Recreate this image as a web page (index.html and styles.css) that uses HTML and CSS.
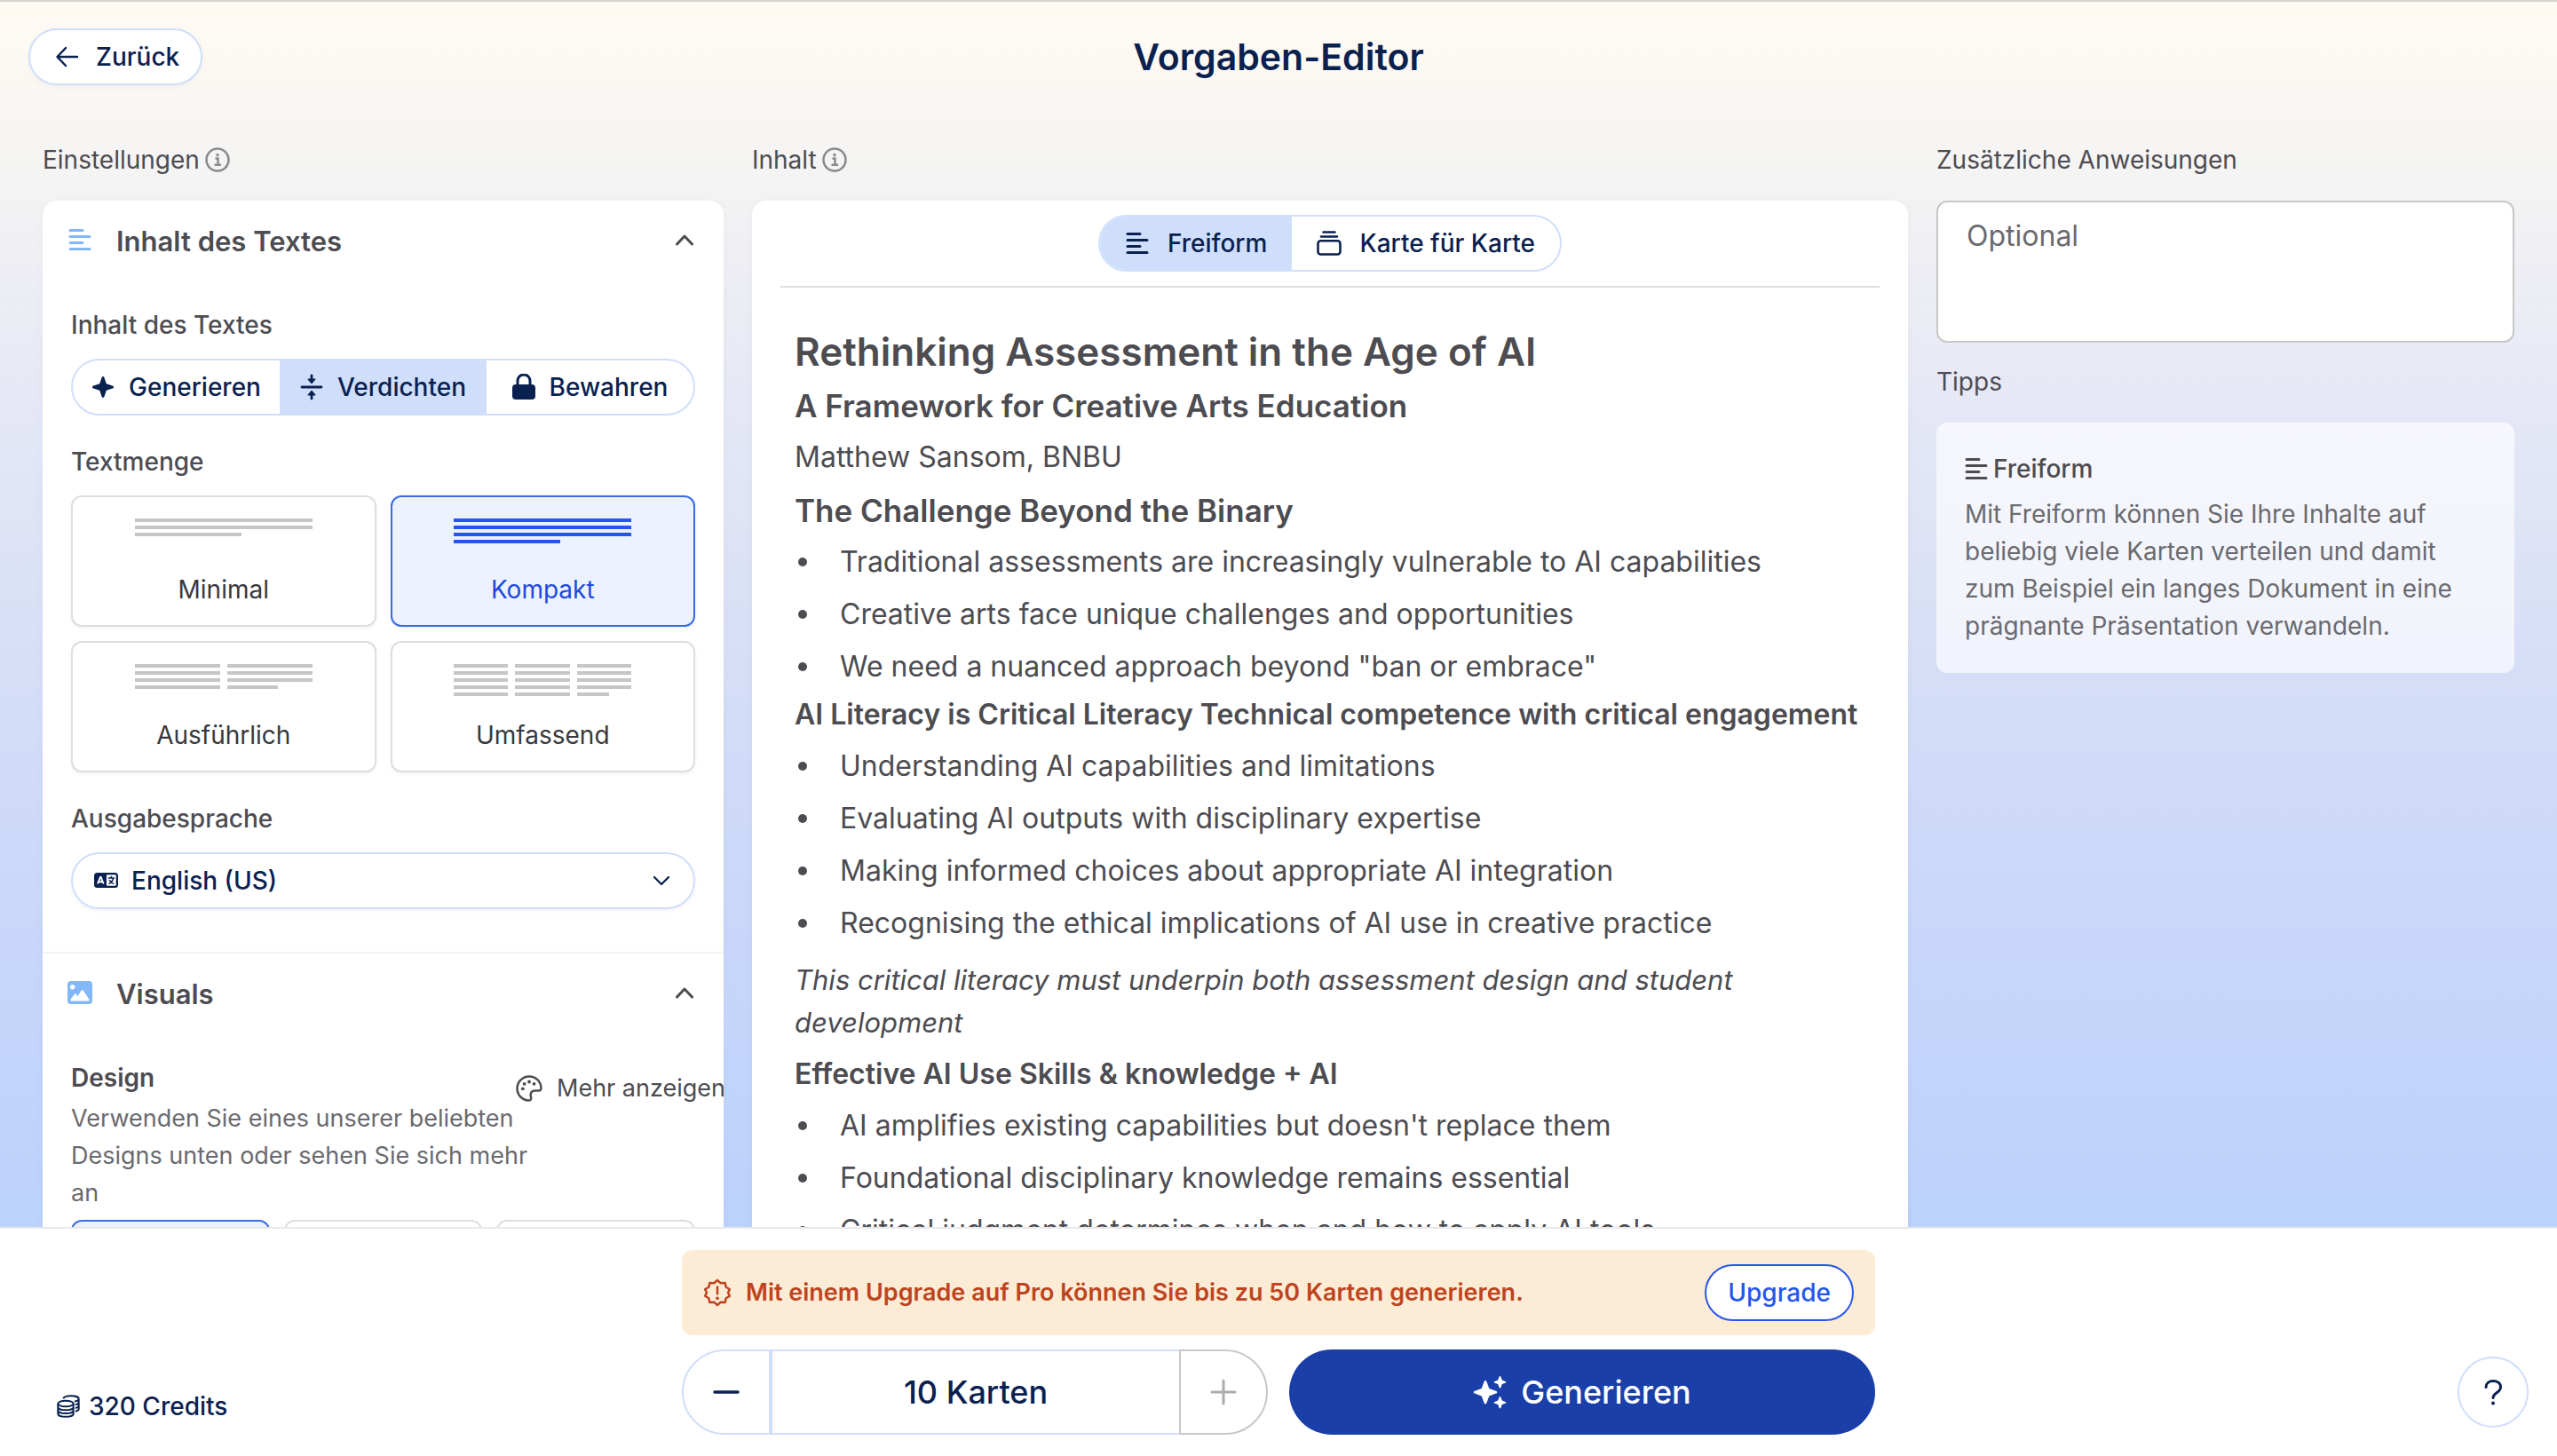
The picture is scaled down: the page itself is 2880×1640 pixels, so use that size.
FILE: index.html
```html
<!DOCTYPE html>
<html lang="de">
<head>
<meta charset="utf-8">
<title>Vorgaben-Editor</title>
<link rel="stylesheet" href="styles.css">
</head>
<body>
<svg class="sprite" aria-hidden="true">
  <symbol id="i-lines" viewBox="0 0 26 26"><path d="M2 2.500h14M2 9.500h22M2 16.500h14M2 23.500h22" fill="none" stroke="currentColor" stroke-width="3" stroke-linecap="round"/></symbol>
  <symbol id="i-info" viewBox="0 0 28 28"><g fill="none" stroke="currentColor" stroke-width="2.500"><circle cx="14" cy="14" r="12.500"/><path d="M11.500 12.500h3v7M10.500 19.800h7.500"/></g><circle cx="14" cy="8.500" r="1.700" fill="currentColor"/></symbol>
  <symbol id="i-up" viewBox="0 0 24 24"><path d="M3.500 17 12 8l8.500 9" fill="none" stroke="currentColor" stroke-width="3" stroke-linecap="round" stroke-linejoin="round"/></symbol>
</svg>
<header class="topbar">
  <button class="pill back" type="button">
    <svg width="28" height="28" viewBox="0 0 28 28"><path d="M25 14H3M12 4 2.500 14 12 24" fill="none" stroke="currentColor" stroke-width="2.500" stroke-linecap="round" stroke-linejoin="round"/></svg>
    Zurück
  </button>
  <h1 class="title">Vorgaben-Editor</h1>
</header>

<main class="columns">
  <section class="column">
    <h2 class="column-label">Einstellungen <svg class="info"><use href="#i-info"/></svg></h2>
    <div class="panel">
      <section>
        <button class="section-head" type="button">
          <svg class="section-icon"><use href="#i-lines"/></svg>
          <span>Inhalt des Textes</span>
          <svg class="chev"><use href="#i-up"/></svg>
        </button>
        <div class="section-body">
          <h3 class="field-label">Inhalt des Textes</h3>
          <div class="segments thirds">
            <button class="segment" type="button">
              <svg width="26" height="26" viewBox="0 0 26 26"><path d="M13 1c.8 0 1.200.6 1.500 1.400l2.300 6.800 6.900 2.300c.9.300 1.300.8 1.300 1.500s-.4 1.200-1.300 1.500l-6.900 2.300-2.300 6.800c-.3.800-.7 1.400-1.500 1.400s-1.200-.6-1.500-1.400l-2.300-6.800-6.900-2.300C1.400 14.200 1 13.700 1 13s.4-1.200 1.300-1.500l6.900-2.300 2.300-6.800C11.800 1.600 12.200 1 13 1z" fill="currentColor"/></svg>
              Generieren</button>
            <button class="segment is-on" type="button">
              <svg width="26" height="30" viewBox="0 0 26 30"><path d="M2 15h22" stroke="currentColor" stroke-width="2.800" stroke-linecap="round"/><path d="M13 2v5M13 28v-5" stroke="currentColor" stroke-width="2.800" stroke-linecap="round"/><path d="M8.800 6h8.400L13 11zM8.800 24h8.400L13 19z" fill="currentColor" stroke="currentColor" stroke-linejoin="round"/></svg>
              Verdichten</button>
            <button class="segment" type="button">
              <svg width="26" height="30" viewBox="0 0 26 30"><rect x="0" y="12" width="26" height="17" rx="4" fill="currentColor"/><path d="M6 14V8a7 7 0 0 1 14 0v6" fill="none" stroke="currentColor" stroke-width="3"/></svg>
              Bewahren</button>
          </div>
          <h3 class="field-label">Textmenge</h3>
          <div class="amounts">
            <label class="amount"><input type="radio" name="amount">
              <svg viewBox="0 0 200 40"><path d="M0 2h200M0 10h200M0 18h120"/></svg>Minimal</label>
            <label class="amount"><input type="radio" name="amount" checked>
              <svg viewBox="0 0 200 40"><path d="M0 2h200M0 10h200M0 18h200M0 26h120"/></svg>Kompakt</label>
            <label class="amount"><input type="radio" name="amount">
              <svg viewBox="0 0 200 40"><path d="M0 2h96M104 2h96M0 10h96M104 10h96M0 18h96M104 18h96M0 26h96M104 26h57"/></svg>Ausführlich</label>
            <label class="amount"><input type="radio" name="amount">
              <svg viewBox="0 0 200 40"><path d="M0 2h61M69 2h62M139 2h61M0 10h61M69 10h62M139 10h61M0 18h61M69 18h62M139 18h61M0 26h61M69 26h62M139 26h61M0 34h61M69 34h62M139 34h36"/></svg>Umfassend</label>
          </div>
          <label class="field-label" for="lang">Ausgabesprache</label>
          <div class="select-box">
            <svg width="28" height="28" viewBox="0 0 28 28"><rect x="0" y="5" width="27" height="17" rx="3.500" fill="currentColor"/><path d="m4 17.500 3-7.500h.6l3 7.500M5.100 15.300h4.400" fill="none" stroke="#fff" stroke-width="1.900"/><rect x="14" y="7.300" width="10.700" height="12.400" rx="1" fill="#fff"/><path d="M15.800 11h7.200M19.400 8.800v2M21.800 11c-.8 3-2.800 5.300-5.300 6.600M17 13c1 2 2.800 3.800 5.300 4.600" fill="none" stroke="currentColor" stroke-width="1.500"/></svg>
            <select id="lang"><option>English (US)</option></select>
            <svg width="24" height="24" viewBox="0 0 24 24"><path d="m4 8 8 8 8-8" fill="none" stroke="currentColor" stroke-width="2.300" stroke-linecap="round" stroke-linejoin="round"/></svg>
          </div>
        </div>
      </section>
      <section class="section-next">
        <button class="section-head" type="button">
          <svg class="section-icon" viewBox="0 0 26 26"><path fill-rule="evenodd" d="M4 0h19a4 4 0 0 1 4 4v18a4 4 0 0 1-4 4H3a4 4 0 0 1-4-4V4a4 4 0 0 1 4-4zM4.700 4a2.700 2.700 0 1 0 0 5.400 2.700 2.700 0 0 0 0-5.400zM3.500 22.500h19c1 0 1.500-.9 1-1.700l-6.800-10.300c-.5-.8-1.500-.8-2 0L10.500 17l-1.800-2.200c-.5-.7-1.400-.7-1.900 0l-4.200 6c-.5.800-.1 1.700.9 1.700z" fill="currentColor"/></svg>
          <span>Visuals</span>
          <svg class="chev"><use href="#i-up"/></svg>
        </button>
        <div class="section-body">
          <div class="design">
            <h3 class="design-title">Design</h3>
            <button class="more" type="button">
              <svg width="30" height="30" viewBox="0 0 30 30"><path d="M28.500 14.500C28.200 7 22.300 1.500 15 1.500S1.500 7.500 1.500 15c0 7 5.200 12.700 12 13.500 3.300.3 4.300-1.700 3.500-4.200-1-3.600.3-6.800 4.500-6.800h4.200c1.900 0 2.900-1.200 2.800-3z" fill="none" stroke="currentColor" stroke-width="2.500" stroke-linejoin="round"/><g fill="currentColor"><circle cx="7.800" cy="15.300" r="1.900"/><circle cx="9.600" cy="9.800" r="1.900"/><circle cx="15" cy="7.500" r="1.900"/><circle cx="20.500" cy="9.800" r="1.900"/></g></svg>
              Mehr anzeigen</button>
            <p class="design-text">Verwenden Sie eines unserer beliebten Designs unten oder sehen Sie sich mehr an</p>
          </div>
          <div class="themes">
            <button class="theme is-on" type="button" aria-label="Design 1"></button>
            <button class="theme" type="button" aria-label="Design 2"></button>
            <button class="theme" type="button" aria-label="Design 3"></button>
          </div>
        </div>
      </section>
    </div>
  </section>

  <section class="column">
    <h2 class="column-label">Inhalt <svg class="info"><use href="#i-info"/></svg></h2>
    <div class="panel content">
      <div class="tabs">
        <div class="segments tabset">
          <button class="segment is-on" type="button"><svg width="28" height="26"><use href="#i-lines"/></svg>Freiform</button>
          <button class="segment" type="button"><svg width="28" height="28" viewBox="0 0 28 28"><path d="M7.500 1.500h13M5 6.500h18" stroke="currentColor" stroke-width="2.600" stroke-linecap="round"/><rect x="1.500" y="11.300" width="25" height="15.200" rx="3" fill="none" stroke="currentColor" stroke-width="2.600"/></svg>Karte für Karte</button>
        </div>
      </div>
      <article class="doc">
        <h1>Rethinking Assessment in the Age of AI</h1>
        <h2>A Framework for Creative Arts Education</h2>
        <p>Matthew Sansom, BNBU</p>
        <h3>The Challenge Beyond the Binary</h3>
        <ul>
          <li>Traditional assessments are increasingly vulnerable to AI capabilities</li>
          <li>Creative arts face unique challenges and opportunities</li>
          <li>We need a nuanced approach beyond "ban or embrace"</li>
        </ul>
        <h4>AI Literacy is Critical Literacy Technical competence with critical engagement</h4>
        <ul>
          <li>Understanding AI capabilities and limitations</li>
          <li>Evaluating AI outputs with disciplinary expertise</li>
          <li>Making informed choices about appropriate AI integration</li>
          <li>Recognising the ethical implications of AI use in creative practice</li>
        </ul>
        <p class="quote"><em>This critical literacy must underpin both assessment design and student development</em></p>
        <h4>Effective AI Use Skills &amp; knowledge + AI</h4>
        <ul>
          <li>AI amplifies existing capabilities but doesn't replace them</li>
          <li>Foundational disciplinary knowledge remains essential</li>
          <li>Critical judgment determines when and how to apply AI tools</li>
        </ul>
      </article>
    </div>
  </section>

  <section class="column">
    <label class="column-label" for="extra">Zusätzliche Anweisungen</label>
    <textarea id="extra" class="extra" placeholder="Optional"></textarea>
    <h2 class="column-label tips-label">Tipps</h2>
    <div class="tip">
      <h3><svg width="26" height="26"><use href="#i-lines"/></svg>Freiform</h3>
      <p>Mit Freiform können Sie Ihre Inhalte auf beliebig viele Karten verteilen und damit zum Beispiel ein langes Dokument in eine prägnante Präsentation verwandeln.</p>
    </div>
  </section>
</main>

<footer class="footer">
  <div class="credits">
    <svg width="26" height="26" viewBox="0 0 26 26"><g fill="none" stroke="currentColor" stroke-width="2"><ellipse cx="10" cy="10" rx="8.700" ry="3.300"/><path d="M1.300 10v11.500c0 2 3.900 3.300 8.700 3.300s8.700-1.300 8.700-3.300V10M1.300 14c0 2 3.900 3.300 8.700 3.300s8.700-1.300 8.700-3.300M1.300 17.800c0 2 3.900 3.300 8.700 3.300s8.700-1.300 8.700-3.300"/><path d="M7.300 4.300C8 2.500 11.500 1.300 16 1.300c5 0 8.700 1.400 8.700 3.200s-2 2.700-4.700 3M24.700 4.500V16c0 1.200-1.300 2.200-3.700 2.800M24.700 8.500c0 1.200-1.300 2.200-3.700 2.800M24.700 12.300c0 1.200-1.300 2.200-3.700 2.800"/></g></svg>
    320 Credits
  </div>
  <div class="actions">
    <div class="notice">
      <svg width="32" height="32" viewBox="0 0 32 32"><path d="M16 2l3.700 3.200 5-.3 1 4.800 4.200 2.600L28 16l1.900 3.700-4.200 2.600-1 4.800-5-.3L16 30l-3.700-3.200-5 .3-1-4.800-4.200-2.600L4 16l-1.900-3.700 4.200-2.600 1-4.800 5 .3z" fill="none" stroke="currentColor" stroke-width="2.500" stroke-linejoin="round"/><path d="M16 9.500v8" stroke="currentColor" stroke-width="2.500" stroke-linecap="round"/><circle cx="16" cy="22.300" r="1.900" fill="currentColor"/></svg>
      <p>Mit einem Upgrade auf Pro können Sie bis zu 50 Karten generieren.</p>
      <button class="pill upgrade" type="button">Upgrade</button>
    </div>
    <div class="run">
      <div class="stepper">
        <button type="button" class="step minus" aria-label="Weniger Karten"><svg width="32" height="32" viewBox="0 0 32 32"><path d="M3 16h26" stroke="currentColor" stroke-width="3.500" stroke-linecap="round"/></svg></button>
        <select class="count" aria-label="Anzahl der Karten"><option>10 Karten</option></select>
        <button type="button" class="step plus" aria-label="Mehr Karten" disabled><svg width="32" height="32" viewBox="0 0 32 32"><path d="M3 16h26M16 3v26" stroke="currentColor" stroke-width="3" stroke-linecap="round"/></svg></button>
      </div>
      <button class="generate" type="button">
        <svg width="38" height="38" viewBox="0 0 38 38" fill="currentColor"><path d="M14 6c.8 0 1.200.6 1.500 1.400l2.800 7.600 7.600 2.800c.9.300 1.300.7 1.300 1.400s-.4 1.100-1.300 1.400l-7.600 2.800-2.800 7.600c-.3.800-.7 1.400-1.500 1.400s-1.200-.6-1.500-1.400l-2.800-7.600-7.600-2.800C1.200 20.300.8 19.900.8 19.200s.4-1.100 1.300-1.400L9.700 15l2.800-7.600C12.800 6.600 13.200 6 14 6z"/><path id="s" d="M30.500 1c.5 0 .7.300.9.800l1.400 3.700 3.700 1.400c.5.200.8.400.8.900s-.3.700-.8.900l-3.700 1.400-1.400 3.700c-.2.500-.4.800-.9.800s-.7-.3-.9-.8l-1.400-3.700-3.700-1.400c-.5-.2-.8-.4-.8-.9s.3-.7.8-.9l3.700-1.400 1.400-3.700c.2-.5.4-.8.9-.8z"/><use href="#s" y="23"/></svg>
        Generieren</button>
    </div>
  </div>
  <button class="help" type="button" aria-label="Hilfe"><svg width="40" height="40" viewBox="0 0 40 40"><path d="M12 14.500C12 10 15.500 7.500 20 7.500s8.500 2.500 8.500 7c0 6-8.500 6.500-8.500 12" fill="none" stroke="currentColor" stroke-width="3" stroke-linecap="round"/><circle cx="20" cy="32.500" r="2" fill="currentColor"/></svg></button>
</footer>
</body>
</html>
```
FILE: styles.css
```css
* { box-sizing: border-box; margin: 0; padding: 0; }

:root {
  --navy: #0a2150;
  --sky: #cfdffb;
  --blue: #2556ec;
  --text: #4c4c51;
  --muted: #6a6a6f;
  --line: #dedede;
}

body {
  display: flex;
  flex-direction: column;
  height: 100vh;
  overflow: hidden;
  border-top: 2px solid #d8d5d0;
  background: linear-gradient(#fffbf2 0, #fefaf3 2%, #f3f3f3 13%, #e6e8f5 27%, #d6def7 46%, #c9d7f9 63%, #bbd2fb 84%);
  color: var(--text);
  font: 400 28px/40px Inter, "Liberation Sans", sans-serif;
}

h1, h2, h3, h4 { font-size: inherit; line-height: inherit; font-weight: inherit; }
button, select, textarea { font: inherit; color: inherit; background: none; border: 0; appearance: none; }
svg { flex: none; }
.sprite { display: none; }

.topbar {
  display: grid;
  grid-template-columns: 1fr auto 1fr;
  align-items: center;
  padding: 30px 32px;
}

.title { font-size: 41px; line-height: 48px; font-weight: 600; color: var(--navy); }

.pill {
  display: flex;
  align-items: center;
  height: 64px;
  border: 2px solid var(--sky);
  border-radius: 32px;
  background: #fff;
  color: var(--navy);
  font-weight: 500;
}

.back { justify-self: start; gap: 18px; padding: 0 24px 0 28px; box-shadow: 0 2px 6px #0000000a; }

.columns {
  flex: 1;
  min-height: 0;
  overflow: hidden;
  display: grid;
  grid-template-columns: 767fr 1302fr 651fr;
  gap: 32px;
  padding: 34px 48px 0;
}

.column { min-width: 0; }
.column-label { display: flex; align-items: center; gap: 6px; margin-bottom: 26px; }
.info { width: 28px; height: 28px; color: #8a8a8e; }

.panel {
  min-height: 100vh;
  border-radius: 16px;
  overflow: hidden;
  background: #fff;
  box-shadow: 0 2px 8px #0000000a;
}

.section-next { border-top: 2px solid #f3f3f3; }

.section-head {
  display: flex;
  align-items: center;
  gap: 28px;
  width: 100%;
  height: 92px;
  padding: 0 32px 0 29px;
  text-align: left;
  font-size: 31px;
  font-weight: 600;
}

.section-head span { flex: 1; }
.section-head svg { margin-bottom: 4px; }
.section-icon { width: 26px; height: 26px; color: #82b8f7; overflow: visible; }
.chev { width: 24px; height: 24px; }
.section-body { padding: 28px 32px 48px; }
.field-label { display: block; margin: 32px 0 18px; font-weight: 500; }
.field-label:first-child { margin-top: 0; }

.segments {
  display: flex;
  height: 64px;
  border: 2px solid var(--sky);
  border-radius: 32px;
  overflow: hidden;
  background: #fff;
}

.segment {
  flex: auto;
  display: flex;
  align-items: center;
  justify-content: center;
  gap: 16px;
  color: var(--navy);
  font-weight: 500;
  white-space: nowrap;
}

.thirds .segment { flex: 1 1 0; }
.segment.is-on { background: var(--sky); }

.amounts { display: grid; grid-template-columns: 1fr 1fr; gap: 16px; }

.amount {
  display: flex;
  flex-direction: column;
  align-items: center;
  height: 148px;
  padding-top: 24px;
  gap: 20px;
  border: 2px solid var(--line);
  border-radius: 12px;
  box-shadow: 0 2px 4px #0000000d;
  color: #38383c;
}

.amount input { position: absolute; opacity: 0; }
.amount svg { width: 200px; height: 40px; fill: none; stroke: #c6c6c6; stroke-width: 4; }
.amount:has(:checked) { border-color: #3a6be0; background: #ebf2fd; color: #2148dd; }
.amount:has(:checked) svg { stroke: var(--blue); }

.select-box {
  display: flex;
  align-items: center;
  gap: 14px;
  height: 64px;
  padding: 0 24px;
  border: 2px solid var(--sky);
  border-radius: 32px;
  box-shadow: 0 2px 4px #0000000d;
  color: var(--navy);
}

.select-box select { flex: 1; font-weight: 500; }

.design {
  display: grid;
  grid-template-columns: 501px auto;
  grid-template-rows: 45px auto;
}

.design-title { font-weight: 600; }
.more { display: flex; align-items: center; gap: 16px; height: 64px; font-size: 27px; white-space: nowrap; }
.design-text { grid-column: 1 / -1; max-width: 530px; font-size: 27px; line-height: 42px; color: var(--muted); }

.themes { display: grid; grid-template-columns: repeat(3, 1fr); gap: 16px; margin-top: 9px; }
.theme { height: 160px; border: 2px solid var(--line); border-radius: 12px; }
.theme.is-on { border-color: #3a6be0; background: #ebf2fd; }

.content { padding: 0 32px; }
.tabs { display: flex; justify-content: center; padding: 16px 0; border-bottom: 2px solid var(--line); }
.tabset .segment { gap: 20px; padding: 0 28px; }

.doc { padding: 44px 16px; font-size: 32px; line-height: 48px; }
.doc h1 { margin-bottom: 9px; font-size: 44px; line-height: 56px; font-weight: 600; }
.doc h2 { margin-bottom: 10px; font-size: 35px; font-weight: 600; }
.doc h3 { margin: 12px 0 10px; font-size: 35px; font-weight: 600; }
.doc h4 { margin-bottom: 10px; font-weight: 600; white-space: nowrap; }
.doc ul + h4 { margin-top: -5px; }
.doc li { display: flex; align-items: center; gap: 37px; margin-bottom: 11px; padding-left: 4px; }
.doc li::before { content: ""; width: 10px; height: 10px; border-radius: 50%; background: var(--text); }
.doc .quote { margin: 16px 0 10px; font-size: 31px; }

.extra {
  display: block;
  width: 100%;
  height: 160px;
  padding: 16px 32px;
  border: 2px solid #c8c8c8;
  border-radius: 12px;
  background: #fff;
  font-size: 32px;
  line-height: 44px;
  resize: none;
}

.extra::placeholder { color: var(--muted); opacity: 1; }
.tips-label { margin-top: 24px; }

.tip { padding: 32px; border-radius: 12px; background: #ffffffa6; color: var(--muted); line-height: 42px; }
.tip h3 { display: flex; align-items: center; gap: 6px; margin-bottom: 10px; line-height: 40px; font-weight: 500; color: var(--text); }

.footer {
  display: grid;
  grid-template-columns: 1fr minmax(0, 1344px) 1fr;
  align-items: end;
  padding: 24px 32px;
  border-top: 2px solid #e8e8e8;
  background: #fff;
  color: var(--navy);
}

.credits { display: flex; align-items: center; gap: 10px; padding: 0 0 12px 32px; font-weight: 500; }

.notice {
  display: flex;
  align-items: center;
  gap: 16px;
  height: 96px;
  padding: 0 24px;
  border-radius: 12px;
  background: #fcecd6;
  color: #be4420;
  font-size: 27px;
  font-weight: 600;
}

.notice p { flex: 1; }
.upgrade { padding: 0 24px; border-color: var(--blue); color: var(--blue); font-size: 28px; }

.run { display: grid; grid-template-columns: 1fr 1fr; gap: 24px; margin-top: 16px; font-size: 36px; font-weight: 500; }
.stepper { display: grid; grid-template-columns: 100px 1fr 100px; height: 96px; }
.step { display: grid; place-items: center; border: 2px solid var(--sky); }
.minus { border-radius: 48px 0 0 48px; }
.plus { border-color: #c8c8c8; border-radius: 0 48px 48px 0; color: #adadad; }
.count { border: solid var(--sky); border-width: 2px 0 2px 2px; text-align: center; text-align-last: center; }

.generate {
  display: flex;
  align-items: center;
  justify-content: center;
  gap: 16px;
  border-radius: 48px;
  background: #1b3fa8;
  color: #fff;
}

.help {
  justify-self: end;
  display: grid;
  place-items: center;
  width: 80px;
  height: 80px;
  margin-bottom: 8px;
  border: 2px solid var(--sky);
  border-radius: 50%;
}
```
